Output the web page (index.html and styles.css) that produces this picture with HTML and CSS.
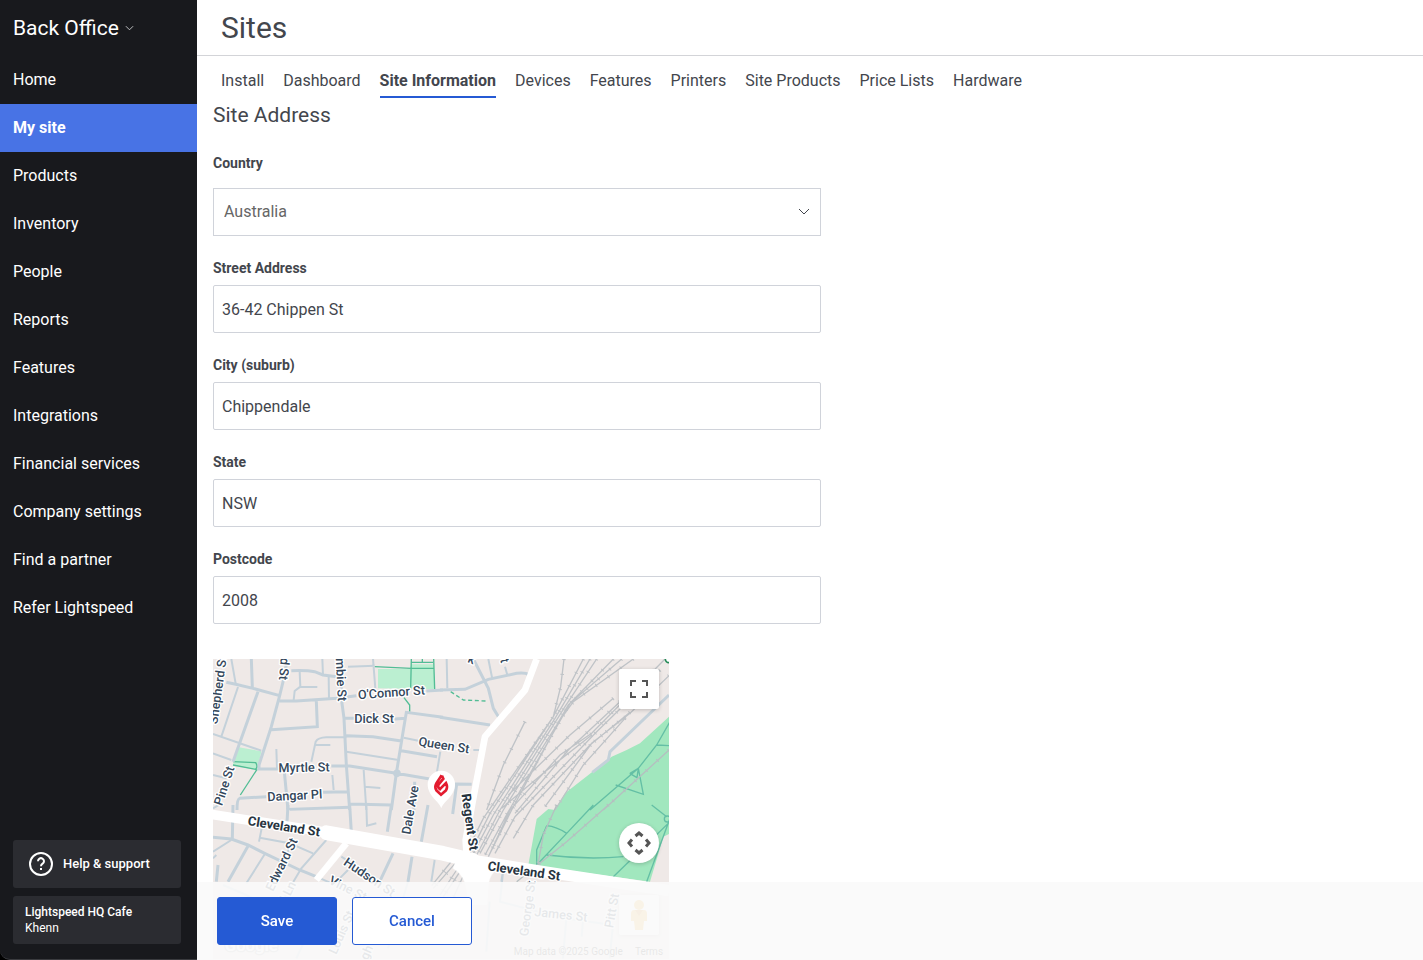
FILE: index.html
```html
<!DOCTYPE html>
<html lang="en">
<head>
<meta charset="utf-8">
<meta name="viewport" content="width=device-width, initial-scale=1">
<title>Sites – Back Office</title>
<link rel="stylesheet" href="styles.css">
</head>
<body>
<div class="app">
  <aside class="sidebar">
    <button class="brand" type="button">Back Office
      <svg class="brand-chevron" viewBox="0 0 10 6" aria-hidden="true"><path d="M1 1l4 4 4-4"/></svg>
    </button>
    <nav class="menu" aria-label="Main">
      <a href="#">Home</a>
      <a href="#" class="active" aria-current="page">My site</a>
      <a href="#">Products</a>
      <a href="#">Inventory</a>
      <a href="#">People</a>
      <a href="#">Reports</a>
      <a href="#">Features</a>
      <a href="#">Integrations</a>
      <a href="#">Financial services</a>
      <a href="#">Company settings</a>
      <a href="#">Find a partner</a>
      <a href="#">Refer Lightspeed</a>
    </nav>
    <div class="sidebar-foot">
      <button class="card help" type="button">
        <svg viewBox="0 0 24 24" aria-hidden="true"><circle cx="12" cy="12" r="11"/><path d="M9 9.200a3 3 0 1 1 4.600 2.500C12.500 12.400 12 12.800 12 14.200"/><path d="M12 16v2"/></svg>
        Help &amp; support
      </button>
      <button class="card account" type="button"><strong>Lightspeed HQ Cafe</strong><span>Khenn</span></button>
    </div>
  </aside>

  <main class="main">
    <header class="page-head"><h1>Sites</h1></header>
    <nav class="tabs" aria-label="Site sections">
      <a href="#">Install</a>
      <a href="#">Dashboard</a>
      <a href="#" class="active" aria-current="page">Site Information</a>
      <a href="#">Devices</a>
      <a href="#">Features</a>
      <a href="#">Printers</a>
      <a href="#">Site Products</a>
      <a href="#">Price Lists</a>
      <a href="#">Hardware</a>
    </nav>
    <form class="form" id="site-form">
      <h2>Site Address</h2>
      <div class="field country">
        <label for="country">Country</label>
        <div class="select">
          <select id="country"><option>Australia</option></select>
          <svg viewBox="0 0 12 8" aria-hidden="true"><path d="M1 1l5 5 5-5"/></svg>
        </div>
      </div>
      <div class="field"><label for="street">Street Address</label><input id="street" type="text" value="36-42 Chippen St"></div>
      <div class="field"><label for="city">City (suburb)</label><input id="city" type="text" value="Chippendale"></div>
      <div class="field"><label for="state">State</label><input id="state" type="text" value="NSW"></div>
      <div class="field"><label for="postcode">Postcode</label><input id="postcode" type="text" value="2008"></div>

      <div class="map">
        <svg class="map-canvas" viewBox="0 0 1368 900" role="img" aria-label="Map of Chippendale">
          <rect class="land" width="1368" height="900"/>
          <path class="park" d="M1368 173 1281 253 1241 273 1196 293 1130 345 1056 403 1025 453 1006 450 971 480 946 618 1311 668 1351 533 1368 525z"/>
          <path class="garden" d="M495 30h95l5-14h67l3 75-170-3zM75 264l15 3 55 10-12 58-73-18z"/>
          <g class="trail">
            <path d="M485 23l110 5h67M595 0l-2 88M628 0v10M595 10h65M662 0l3 91M573 116l17 22v20M60 308l68 3q8 12 0 20l-68-13M132 331l-50 77"/>
            <path d="M713 98l38 25 68 3" stroke-dasharray="12 8"/>
            <path class="deep" d="M1371 188l-40 70-55 70-145 125M1331 258l37 2M1251 343l25-15-4 28-22-13M1208 378l83 28-15-78M1141 438l-80 85-90 95M1001 500q30 3 60 23M1001 588q120 15 230 5M1371 488l-170 165M1371 478l-70 190M1316 438l45 35M1001 500l-30 73v50"/>
            <circle class="deep" cx="1363" cy="480" r="9"/>
          </g>

          <g class="lane">
            <g transform="translate(0 -12)">
              <path d="M55 12l13 74M75 96 25 245M260 50l2 45-17 13-3 27M262 95l51 1M328 12l2 48M347 65l1 65M405 35l80-3M480 12l7 88M295 320l13-60q7-12 32-13h60M305 270h47M400 290l152 24M0 237l145 50M0 295l55 20M190 282l2 58M358 360l4 45M222 462l188-7M452 345l8 120M455 395l47 4M682 290l-10 60M0 360l40 10M572 248l48 10"/>
            </g>
            <path d="M826 0l12 60M876 23l7 25M781 273h20M701 0l2 88"/>
            <g transform="translate(0 438)">
              <path d="M140 98l90 17 70 30M150 50l-12 60M155 148l-55 87M0 140l55-35M230 14l180-6M460 0l2 62 28-7M340 105l-75 85-65 110M240 100l-35 90M385 155l55 35M665 165l-10 65M405 195l-25 25M0 160l10-10M0 10l25-15"/>
              <path d="M310 215l170 75 120 60M585 230l-60 200M30 240l70 30 180 90M330 290l-80 170M871 190l-10 100 190 50 150 20M1060 340l-10 120M830 290l-10 150M1200 360l-10 100M871 190l-6 40M1110 345l-4 50"/>
            </g>
          </g>
          <g class="street">
            <g transform="translate(0 -12)">
              <path d="M115 12l3 86M40 82l28 6 52 12 80 22M135 110 60 320M222 12l-7 48-15 62-25 93-37 115v12h62M235 47q45-2 70 3l25 10 42 5M200 138h50l122-8 58-8M310 138l3 77-138 9M383 12l2 118 8 60 7 140 10 135M395 190h35M545 192l33-2M640 108l50-3M690 187l-110-15-8 48-22 135-15 110M400 242l80 3 85 13M565 287l107 18M355 333h55l140 22 100 17M213 340l12 125M72 465q0-33 8-35l80-5M330 412l75-2M412 447l123 3M605 380l-2 85"/>
              <circle cx="552" cy="355" r="7"/>
            </g>
            <g transform="translate(681 -12)">
              <path d="M0 105l75-2 70-30 85-18q28-3 35 5M100 12l45 88 15 60 18 30M0 187l150 23M45 387l50 1M50 387l-12 90M687 120 510 290l-5 25-48 37"/>
            </g>
            <g transform="translate(0 438)">
              <path d="M0 97l55 5 50 18 50 25 105 50 50 20M60 0l-2 100M108 118 45 230M225 0l-3 52M410 0l5 82M535 0l-12 80M645 0l-20 110M540 145l-40 85M597 155l-12 75M15 180l-5 50"/>
            </g>
          </g>

          <g class="rail">
            <path id="rails" d="M1053 0l-10 83-22 90-135 195-75 110-50 100M1111 0l-90 173-190 290-60 120M1131 0l-105 178-185 290-60 115M1151 0l-95 143-195 310-70 135M1201 0l-135 138-35 60-160 255-70 130M1226 0l-155 133-185 325-70 130M1261 0l-180 128-40 55-145 270-70 140M936 188l-65 130-50 135M1356 0l-220 223-95 65-150 165-60 130M1341 33l-190 185-245 255-60 110M1368 50l-117 113-115 90-140 190M1201 118l-130 110-185 180M1221 128l-155 145-160 190M1236 178l-125 140-85 135M1251 160l-120 98-170 180-60 100M1136 228l-140 110-130 110M731 608l-70 80M741 618l-60 90M751 623l-60 90M761 628l-50 110M721 600l-65 80"/>
            <path id="branch" class="branch" d="M1368 273l-197 180M1186 438l-125 110-150 120M1031 438l-40 90-20 110"/>
            <use href="#rails" class="ties"/>
            <use href="#branch" class="ties"/>
          </g>

          <g class="highway">
            <path class="w-regent" d="M971 0l-35 93-120 140-38 200-20 110 4 60"/>
            <path class="w-small" d="M400 553 310 663"/>
            <path class="w-west" d="M-5 466l345 54"/>
            <path class="w-mid" d="M340 521l350 62 90 21"/>
            <path class="w-east" d="M765 602l235 37 368 56"/>
            <path class="plaza" d="M740 580l140 38q-48 12-54 60l-4 60h-60q8-80-42-110z"/>
          </g>

          <g class="labels">
            <text transform="translate(14 92) rotate(-82)">Shepherd St</text>
            <text transform="translate(214 30) rotate(95)">d St</text>
            <text transform="translate(385 62) rotate(87)">mbie St</text>
            <text transform="translate(535 100) rotate(-4)">O'Connor St</text>
            <text transform="translate(483 179)">Dick St</text>
            <text transform="translate(693 258) rotate(9)">Queen St</text>
            <text transform="translate(273 325) rotate(-1)">Myrtle St</text>
            <text transform="translate(245 409) rotate(-3)">Dangar Pl</text>
            <text transform="translate(33 380) rotate(-72)">Pine St</text>
            <text transform="translate(591 453) rotate(-80)">Dale Ave</text>
            <text transform="translate(776 0) rotate(22)">k</text>
            <text transform="translate(876 4) rotate(75)">t</text>
            <text transform="translate(205 616) rotate(-64)">Edward St</text>
            <text transform="translate(222 702) rotate(-64)">d Ln</text>
            <text transform="translate(470 654) rotate(34)">Hudson St</text>
            <text transform="translate(405 688) rotate(27)">Vine St</text>
            <text transform="translate(385 820) rotate(-66)">Louis St</text>
            <text transform="translate(460 880) rotate(-66)">gh</text>
            <text transform="translate(943 748) rotate(-82)">George St</text>
            <text transform="translate(1044 766) rotate(6)">James St</text>
            <text transform="translate(1196 755) rotate(-80)">Pitt St</text>
            <g class="strong">
              <text transform="translate(213 502) rotate(9)">Cleveland St</text>
              <text transform="translate(933 636) rotate(8)">Cleveland St</text>
              <text transform="translate(771 489) rotate(82)">Regent St</text>
            </g>
            <text class="watermark" x="115" y="858">Google</text>
            <text class="credit" x="1066" y="878">Map data ©2025 Google</text>
            <text class="credit" x="1308" y="878">Terms</text>
          </g>

          <g transform="translate(606 290)">
            <path class="pin" d="M79 158C73 137 38 122 38 86a41 41 0 0 1 82 0c0 36-35 51-41 72z"/>
            <path class="flame" d="M80 59 64 83q-6 12 0 21l14 13 15-13q6-10 0-22L77 98M81 60l4 9-14 17q-4 6 1 12l6 5"/>
          </g>
          <circle class="poi" cx="1368" cy="0" r="11"/>
        </svg>
        <button class="map-btn fullscreen" type="button" aria-label="Toggle fullscreen view">
          <svg viewBox="0 0 18 18" width="18" height="18"><path d="M0 0v6h2V2h4V0H0zm16 0h-4v2h4v4h2V0h-2zm0 16h-4v2h6v-6h-2v4zM2 12H0v6h6v-2H2v-4z"/></svg>
        </button>
        <button class="map-btn pan" type="button" aria-label="Map camera controls">
          <svg class="arrows" viewBox="0 0 24 24" width="24" height="24"><path d="M8.500 5 12 2l3.500 3M8.500 19l3.500 3 3.500-3M5 8.500 2 12l3 3.500M19 8.500l3 3.500-3 3.500"/></svg>
        </button>
        <button class="map-btn pegman" type="button" aria-label="Street View">
          <svg viewBox="0 0 18 30" width="18" height="30"><circle cx="9" cy="5" r="5"/><path d="M4 10h10q3 0 3 4v7h-3l-1 9H5l-1-9H1v-7q0-4 3-4z"/><path class="scarf" d="M5 10h8l-4 6z"/></svg>
        </button>
      </div>
    </form>
    <div class="actions">
      <button class="btn primary" type="submit" form="site-form">Save</button>
      <button class="btn" type="button">Cancel</button>
    </div>
  </main>
</div>
</body>
</html>
```
FILE: styles.css
```css
* { box-sizing: border-box; }
body {
  margin: 0;
  background: #000;
  color: #43464d;
  font-family: Roboto, "Liberation Sans", sans-serif;
  font-size: 16px;
  line-height: 24px;
}
button, input, select { font: inherit; color: inherit; }
button { cursor: pointer; }
a { color: inherit; text-decoration: none; }
h1, h2 { margin: 0; font-weight: 400; }

.app { display: flex; min-height: 100vh; }

.sidebar {
  position: sticky;
  top: 0;
  flex: 0 0 197px;
  height: 100vh;
  display: flex;
  flex-direction: column;
  background: #18191d;
  border-bottom: 1px solid #3a3b3f;
  border-bottom-left-radius: 10px;
  color: #fff;
}
.brand {
  display: flex;
  align-items: center;
  gap: 6px;
  height: 56px;
  padding: 0 13px;
  border: 0;
  background: none;
  font-size: 21px;
}
.brand-chevron { width: 9px; height: 6px; fill: none; stroke: #d0d1d4; }
.menu { display: flex; flex-direction: column; }
.menu a { padding: 12px 13px; }
.menu .active { background: #4873e5; font-weight: 700; }
.sidebar-foot {
  display: flex;
  flex-direction: column;
  gap: 8px;
  margin-top: auto;
  padding: 0 16px 15px 13px;
}
.card {
  display: flex;
  height: 48px;
  border: 0;
  border-radius: 3px;
  background: #2b2c31;
  font-size: 12px;
  line-height: 16px;
  text-align: left;
}
.help { align-items: center; gap: 10px; padding: 0 16px; font-size: 13px; font-weight: 500; }
.help svg { width: 24px; height: 24px; fill: none; stroke: #fff; stroke-width: 2; }
.account { flex-direction: column; justify-content: center; padding: 0 12px; }
.account strong { font-weight: 500; }

.main { flex: 1; min-width: 0; background: #fff; }
.page-head {
  height: 56px;
  padding: 8px 24px;
  border-bottom: 1px solid #d3d4d8;
}
h1 { font-size: 30px; line-height: 40px; }
.tabs { display: flex; gap: 19px; padding: 12px 24px 0; }
.tabs a { height: 30px; line-height: 26px; white-space: nowrap; }
.tabs .active { font-weight: 700; border-bottom: 2px solid #255ad4; }

.form { max-width: 640px; padding: 5px 16px 0; }
h2 { font-size: 21px; line-height: 24px; }
.field { display: flex; flex-direction: column; margin-bottom: 24px; }
.field label { margin-bottom: 8px; font-size: 14px; line-height: 17px; font-weight: 700; }
.field input, .field select {
  width: 100%;
  height: 48px;
  padding: 0 8px;
  border: 1px solid #d0d3da;
  border-radius: 2px;
  background: #fff;
}
.country { margin-top: 28px; }
.country label { margin-bottom: 16px; }
.select { display: grid; align-items: center; }
.select select, .select svg { grid-area: 1 / 1; }
.field .select select { appearance: none; padding: 0 10px; border-radius: 0; color: #666; }
.select svg {
  justify-self: end;
  width: 12px;
  height: 8px;
  margin-right: 11px;
  fill: none;
  stroke: #43464d;
  pointer-events: none;
}

.map { position: relative; width: 456px; max-width: 100%; height: 300px; margin-top: 35px; overflow: hidden; }
.map-canvas { display: block; width: 456px; height: 300px; }
.land { fill: #efe9e7; }
.park { fill: #a1e7be; }
.garden { fill: #bbefd1; }
.trail { fill: none; stroke: #52bd95; stroke-width: 4; }
.trail .deep { stroke: #64bfa5; }
.lane { fill: none; stroke: #c4d1da; stroke-width: 6; }
.street { fill: none; stroke: #c4d1da; stroke-width: 9; }
.rail { fill: none; stroke: #bfc3c7; stroke-width: 4; }
.ties { stroke-width: 11; stroke-dasharray: 3 42; }
.branch { stroke: #b5bfc0; }
.highway { fill: none; stroke: #fff; stroke-linejoin: round; }
.w-regent, .w-small { stroke-width: 20; }
.w-west { stroke-width: 29; }
.w-mid { stroke-width: 44; stroke-linecap: round; }
.w-east { stroke-width: 34; }
.plaza { fill: #fff; }
.labels {
  fill: #34475b;
  stroke: #fff;
  stroke-width: 8;
  stroke-linejoin: round;
  paint-order: stroke;
  font-size: 38px;
  font-weight: 500;
  text-anchor: middle;
  dominant-baseline: central;
}
.strong { fill: #27343f; font-size: 39px; font-weight: 700; }
.watermark { fill: #fff; stroke: #b5b5b5; font-size: 50px; font-weight: 700; }
.credit { fill: #444; stroke: none; font-size: 30px; font-weight: 400; }
.pin { fill: #fff; }
.flame { fill: none; stroke: #e31b2f; stroke-width: 8; }
.poi { fill: #fff; stroke: #238a55; stroke-width: 5; }

.map-btn {
  position: absolute;
  right: 10px;
  display: grid;
  place-items: center;
  width: 40px;
  height: 40px;
  padding: 0;
  border: 0;
  border-radius: 2px;
  background: #fff;
  fill: #555;
  box-shadow: 0 1px 4px rgba(0, 0, 0, .2);
}
.fullscreen { top: 10px; }
.pan { top: 164px; border-radius: 50%; }
.pegman { top: 236px; fill: #f4b73f; }
.scarf { fill: #d98b25; }
.arrows { fill: none; stroke: #555; stroke-width: 3; }

.actions {
  position: fixed;
  right: 0;
  bottom: 0;
  left: 197px;
  display: flex;
  gap: 15px;
  padding: 15px 20px;
  background: rgba(250, 250, 250, .9);
}
.btn {
  width: 120px;
  height: 48px;
  border: 1px solid #255ad4;
  border-radius: 3px;
  background: #fff;
  color: #255ad4;
  font-size: 15px;
  font-weight: 500;
}
.primary { background: #255ad4; color: #fff; }
```
